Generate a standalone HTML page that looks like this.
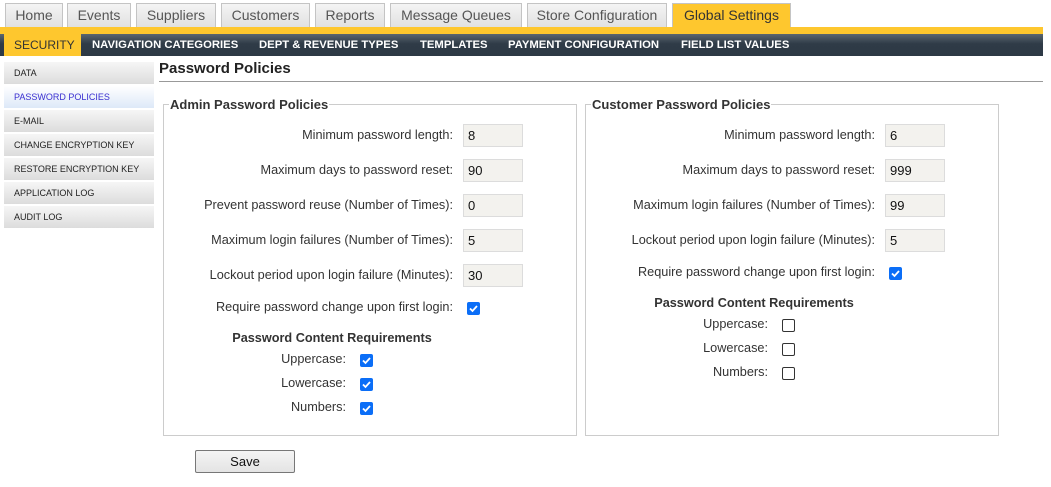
<!DOCTYPE html>
<html><head><meta charset="utf-8"><style>
*{box-sizing:border-box;margin:0;padding:0}
body{width:1051px;height:487px;background:#fff;font-family:"Liberation Sans",Arial,sans-serif;position:relative;overflow:hidden;color:#222}
.a{position:absolute}
.tab{position:absolute;top:3px;height:25px;border:1px solid #c4c4c4;border-bottom:none;background:linear-gradient(#f4f4f4,#e0e0e0);font-size:14px;color:#555;text-align:center;line-height:23px}
.nav{position:absolute;top:34px;height:22px;left:0;width:1043px;background:linear-gradient(#5a6670,#2f3b47 45%,#2d3945);}
.ni{position:absolute;top:38px;font-size:11.3px;font-weight:bold;color:#fff;line-height:14px}
.side{position:absolute;left:4px;width:150px;height:22px;background:linear-gradient(#f6f6f6,#dcdcdc);font-size:9px;color:#222;padding-left:10px;line-height:22px}
fieldset{position:absolute;border:1px solid #ccc;top:104px;height:332px}
.leg{position:absolute;top:97px;background:#fff;font-size:13px;font-weight:bold;padding:0 1px;color:#333}
.lab{position:absolute;font-size:12.7px;text-align:right;color:#333}
.in{position:absolute;width:60px;height:23px;background:#f3f2ee;border:1px solid #dcdcdc;font-size:13px;padding-left:4px;line-height:21px;color:#111}
.cb{position:absolute;width:13px;height:13px;border-radius:2px}
.on{background:#0b6ef7}
.off{border:1px solid #333;background:#fff}
.hd{position:absolute;font-size:12.7px;font-weight:bold;color:#333;text-align:center}
</style></head><body>
<div class="tab" style="left:5px;width:58px">Home</div>
<div class="tab" style="left:67px;width:64px">Events</div>
<div class="tab" style="left:136px;width:80px">Suppliers</div>
<div class="tab" style="left:221px;width:89px">Customers</div>
<div class="tab" style="left:315px;width:70px">Reports</div>
<div class="tab" style="left:390px;width:132px">Message Queues</div>
<div class="tab" style="left:527px;width:140px">Store Configuration</div>
<div class="tab" style="left:672px;width:119px;background:#fec72e;color:#333">Global Settings</div>
<div class="a" style="left:0;top:27px;width:1043px;height:7px;background:#fec72e"></div>
<div class="nav"></div>
<div class="a" style="left:4px;top:34px;width:77px;height:22px;background:#fec72e;font-size:12px;color:#333;line-height:22px;padding-left:10px">SECURITY</div>
<div class="ni" style="left:92px">NAVIGATION CATEGORIES</div>
<div class="ni" style="left:259px">DEPT &amp; REVENUE TYPES</div>
<div class="ni" style="left:420px">TEMPLATES</div>
<div class="ni" style="left:508px">PAYMENT CONFIGURATION</div>
<div class="ni" style="left:681px">FIELD LIST VALUES</div>

<div class="side" style="top:62px">DATA</div>
<div class="side" style="top:86px;background:linear-gradient(#fff,#dde9f8);color:#3a2fd0">PASSWORD POLICIES</div>
<div class="side" style="top:110px">E-MAIL</div>
<div class="side" style="top:134px">CHANGE ENCRYPTION KEY</div>
<div class="side" style="top:158px">RESTORE ENCRYPTION KEY</div>
<div class="side" style="top:182px">APPLICATION LOG</div>
<div class="side" style="top:206px">AUDIT LOG</div>

<div class="a" style="left:159px;top:60px;font-size:15px;font-weight:bold;color:#222">Password Policies</div>
<div class="a" style="left:159px;top:81px;width:884px;height:1px;background:#999"></div>

<fieldset style="left:163px;width:414px"></fieldset>
<div class="leg" style="left:169px">Admin Password Policies</div>
<fieldset style="left:585px;width:414px"></fieldset>
<div class="leg" style="left:591px">Customer Password Policies</div>

<div class="lab" style="right:598px;top:128px">Minimum password length:</div>
<div class="in" style="left:463px;top:124px">8</div>
<div class="lab" style="right:598px;top:163px">Maximum days to password reset:</div>
<div class="in" style="left:463px;top:159px">90</div>
<div class="lab" style="right:598px;top:198px">Prevent password reuse (Number of Times):</div>
<div class="in" style="left:463px;top:194px">0</div>
<div class="lab" style="right:598px;top:233px">Maximum login failures (Number of Times):</div>
<div class="in" style="left:463px;top:229px">5</div>
<div class="lab" style="right:598px;top:268px">Lockout period upon login failure (Minutes):</div>
<div class="in" style="left:463px;top:264px">30</div>
<div class="lab" style="right:598px;top:300px">Require password change upon first login:</div>
<div class="cb on" style="left:467px;top:302px"></div>
<div class="hd" style="left:163px;width:338px;top:331px">Password Content Requirements</div>
<div class="lab" style="right:705px;top:352px">Uppercase:</div>
<div class="cb on" style="left:360px;top:354px"></div>
<div class="lab" style="right:705px;top:376px">Lowercase:</div>
<div class="cb on" style="left:360px;top:378px"></div>
<div class="lab" style="right:705px;top:400px">Numbers:</div>
<div class="cb on" style="left:360px;top:402px"></div>

<div class="lab" style="right:176px;top:128px">Minimum password length:</div>
<div class="in" style="left:885px;top:124px">6</div>
<div class="lab" style="right:176px;top:163px">Maximum days to password reset:</div>
<div class="in" style="left:885px;top:159px">999</div>
<div class="lab" style="right:176px;top:198px">Maximum login failures (Number of Times):</div>
<div class="in" style="left:885px;top:194px">99</div>
<div class="lab" style="right:176px;top:233px">Lockout period upon login failure (Minutes):</div>
<div class="in" style="left:885px;top:229px">5</div>
<div class="lab" style="right:176px;top:265px">Require password change upon first login:</div>
<div class="cb on" style="left:889px;top:267px"></div>
<div class="hd" style="left:585px;width:338px;top:296px">Password Content Requirements</div>
<div class="lab" style="right:283px;top:317px">Uppercase:</div>
<div class="cb off" style="left:782px;top:319px"></div>
<div class="lab" style="right:283px;top:341px">Lowercase:</div>
<div class="cb off" style="left:782px;top:343px"></div>
<div class="lab" style="right:283px;top:365px">Numbers:</div>
<div class="cb off" style="left:782px;top:367px"></div>

<div class="a" style="left:195px;top:450px;width:100px;height:23px;border:1px solid #777;border-radius:2px;background:linear-gradient(#f4f4f4,#e4e4e4);font-size:13px;text-align:center;line-height:21px;color:#111">Save</div>

<svg class="a" style="left:0;top:0" width="1051" height="487">
<g fill="none" stroke="#fff" stroke-width="1.8">
<path d="M470 308.5l2.5 2.5 4.5-5"/><path d="M363 360.5l2.5 2.5 4.5-5"/><path d="M363 384.5l2.5 2.5 4.5-5"/><path d="M363 408.5l2.5 2.5 4.5-5"/><path d="M892 273.5l2.5 2.5 4.5-5"/>
</g></svg>
</body></html>
